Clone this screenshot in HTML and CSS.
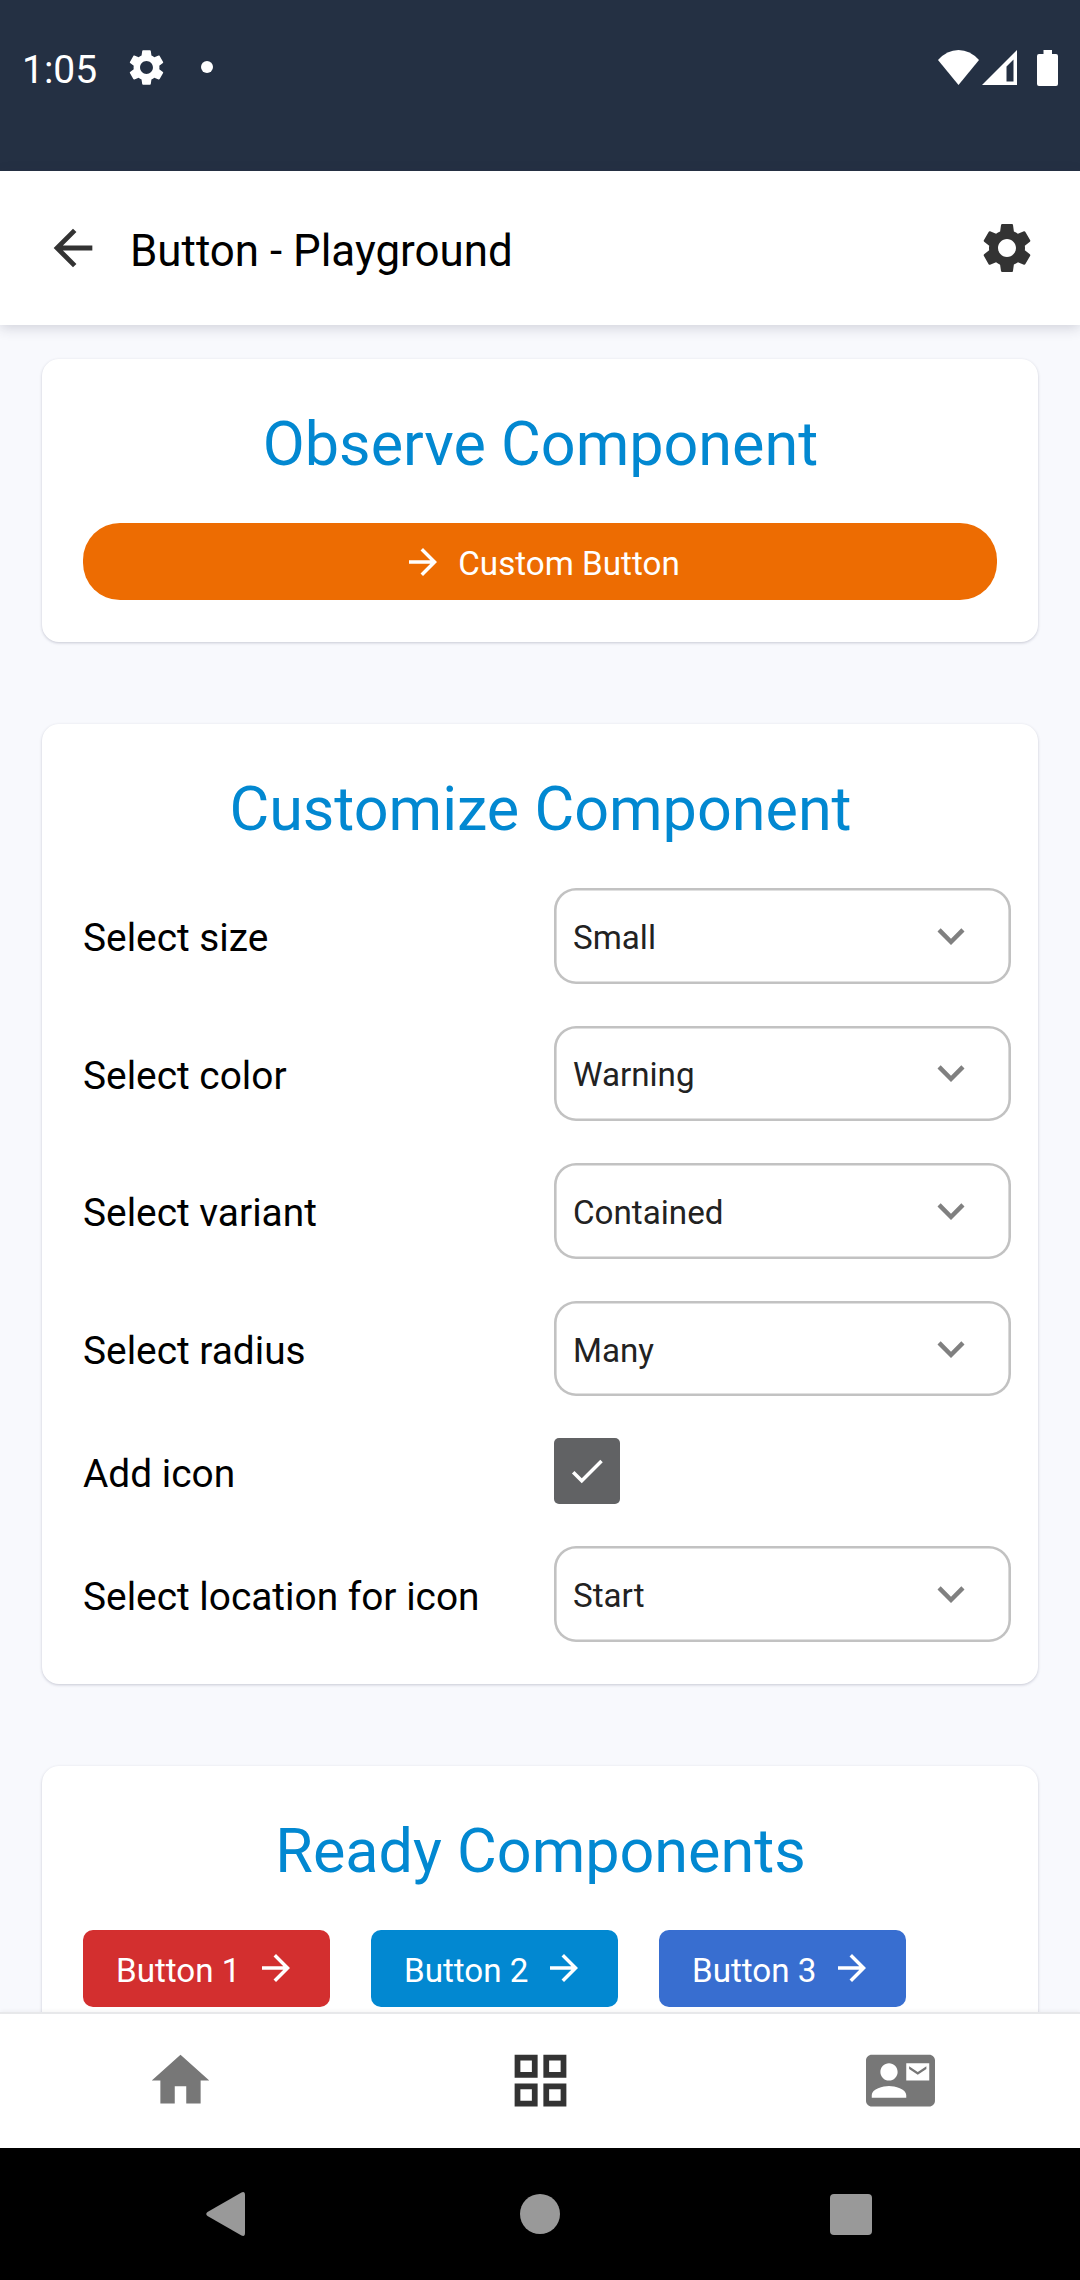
FILE: index.html
```html
<!DOCTYPE html>
<html lang="en">
<head>
<meta charset="utf-8">
<title>Button - Playground</title>
<link rel="stylesheet" href="styles.css">
</head>
<body>
<svg class="defs" aria-hidden="true">
  <symbol id="gear" viewBox="0 0 24 24"><path d="M19.14 12.94c.04-.3.06-.61.06-.94 0-.32-.02-.64-.07-.94l2.03-1.58c.18-.14.23-.41.12-.61l-1.92-3.32c-.12-.22-.37-.29-.59-.22l-2.39.96c-.5-.38-1.03-.7-1.62-.94l-.36-2.54c-.04-.24-.24-.41-.48-.41h-3.84c-.24 0-.43.17-.47.41l-.36 2.54c-.59.24-1.13.57-1.62.94l-2.39-.96c-.22-.08-.47 0-.59.22L2.74 8.87c-.12.21-.08.47.12.61l2.03 1.58c-.05.3-.09.63-.09.94s.02.64.07.94l-2.03 1.58c-.18.14-.23.41-.12.61l1.92 3.32c.12.22.37.29.59.22l2.39-.96c.5.38 1.03.7 1.62.94l.36 2.54c.05.24.24.41.48.41h3.84c.24 0 .44-.17.47-.41l.36-2.54c.59-.24 1.13-.56 1.62-.94l2.39.96c.22.08.47 0 .59-.22l1.92-3.32c.12-.22.07-.47-.12-.61l-2.01-1.58zM12 15.6c-1.98 0-3.6-1.62-3.6-3.6s1.62-3.6 3.6-3.6 3.6 1.62 3.6 3.6-1.62 3.6-3.6 3.6z"/></symbol>
  <symbol id="arrow-right" viewBox="0 0 24 24"><path d="M12 4l-1.41 1.41L16.17 11H4v2h12.17l-5.58 5.59L12 20l8-8z"/></symbol>
  <symbol id="chevron" viewBox="0 0 24 24"><path d="M16.59 8.59L12 13.17 7.41 8.59 6 10l6 6 6-6z"/></symbol>
</svg>

<div class="status-bar">
  <div class="status-group">
    <span class="clock">1:05</span>
    <svg class="status-gear"><use href="#gear"/></svg>
    <span class="dot"></span>
  </div>
  <div class="status-group">
    <svg class="wifi" viewBox="0 0 41 35"><path d="M20.500 35L0 10Q9 0 20.500 0T41 10z"/></svg>
    <svg class="signal" viewBox="0 0 35 35"><path fill-rule="evenodd" d="M35 0V35H0zM31.500 9.500L24.500 16.500V31.500H31.500z"/></svg>
    <svg class="battery" viewBox="0 0 21 36"><path d="M6.500 0H15V4H19Q21 4 21 6V34Q21 36 19 36H2Q0 36 0 34V6Q0 4 2 4H6.500z"/></svg>
  </div>
</div>

<header class="app-bar">
  <svg class="back" viewBox="0 0 24 24"><path d="M20 11H7.830l5.590-5.590L12 4l-8 8 8 8 1.410-1.410L7.830 13H20z"/></svg>
  <h1 class="app-title">Button - Playground</h1>
  <svg class="settings"><use href="#gear"/></svg>
</header>

<main class="content">
  <section class="card">
    <h2 class="card-title">Observe Component</h2>
    <div class="btn btn-wide"><svg class="btn-icon"><use href="#arrow-right"/></svg><span>Custom Button</span></div>
  </section>

  <section class="card">
    <h2 class="card-title">Customize Component</h2>
    <div class="form">
      <div class="row"><span class="label">Select size</span><div class="select"><span>Small</span><svg class="chevron"><use href="#chevron"/></svg></div></div>
      <div class="row"><span class="label">Select color</span><div class="select"><span>Warning</span><svg class="chevron"><use href="#chevron"/></svg></div></div>
      <div class="row"><span class="label">Select variant</span><div class="select"><span>Contained</span><svg class="chevron"><use href="#chevron"/></svg></div></div>
      <div class="row"><span class="label">Select radius</span><div class="select"><span>Many</span><svg class="chevron"><use href="#chevron"/></svg></div></div>
      <div class="row"><span class="label">Add icon</span><div class="checkbox"><svg class="check" viewBox="0 0 24 24"><path d="M9 16.170L4.830 12l-1.420 1.410L9 19 21 7l-1.410-1.410z"/></svg></div></div>
      <div class="row"><span class="label">Select location for icon</span><div class="select"><span>Start</span><svg class="chevron"><use href="#chevron"/></svg></div></div>
    </div>
  </section>

  <section class="card">
    <h2 class="card-title">Ready Components</h2>
    <div class="btn-row">
      <div class="btn btn-error"><span>Button 1</span><svg class="btn-icon"><use href="#arrow-right"/></svg></div>
      <div class="btn btn-info"><span>Button 2</span><svg class="btn-icon"><use href="#arrow-right"/></svg></div>
      <div class="btn btn-primary"><span>Button 3</span><svg class="btn-icon"><use href="#arrow-right"/></svg></div>
    </div>
  </section>
</main>

<nav class="tabs">
  <div class="tab"><svg class="tab-icon" viewBox="0 0 24 24"><path d="M10 20v-6h4v6h5v-8h3L12 3 2 12h3v8z"/></svg></div>
  <div class="tab tab-active"><svg class="tab-icon" viewBox="0 0 24 24"><path fill-rule="evenodd" d="M3 3v8h8V3H3zm6 6H5V5h4v4zm-6 4v8h8v-8H3zm6 6H5v-4h4v4zm4-16v8h8V3h-8zm6 6h-4V5h4v4zm-6 4v8h8v-8h-8zm6 6h-4v-4h4v4z"/></svg></div>
  <div class="tab"><svg class="tab-icon" viewBox="0 0 24 24"><path d="M21 8V7l-3 2-3-2v1l3 2 3-2zm1-5H2C.9 3 0 3.900 0 5v14c0 1.100.9 2 2 2h20c1.100 0 1.990-.9 1.990-2L24 5c0-1.100-.9-2-2-2zM8 6c1.660 0 3 1.340 3 3s-1.340 3-3 3-3-1.340-3-3 1.340-3 3-3zm6 12H2v-1c0-2 4-3.100 6-3.100s6 1.100 6 3.100v1zm8-6h-8V6h8v6z"/></svg></div>
</nav>

<div class="system-nav">
  <svg class="sys-back" viewBox="0 0 39 44"><path d="M35.500 .4Q39 -1 39 3V41Q39 45 35.500 43.600L1.500 24Q-1 22 1.500 20z"/></svg>
  <span class="sys-home"></span>
  <span class="sys-recent"></span>
</div>
</body>
</html>
```
FILE: styles.css
```css
* { box-sizing: border-box; }

body {
  margin: 0;
  width: 1080px;
  height: 2280px;
  overflow: hidden;
  display: flex;
  flex-direction: column;
  background: #f8f9fd;
  font-family: Roboto, sans-serif;
  color: #000;
}

h1, h2 { margin: 0; font-weight: 400; }
svg { display: block; flex: none; fill: currentColor; }
.defs { display: none; }

/* Status bar */
.status-bar {
  height: 171px;
  flex: none;
  padding: 46px 22px 0 22px;
  display: flex;
  justify-content: space-between;
  align-items: flex-start;
  background: #243043;
  color: #fff;
}
.status-group { height: 43px; display: flex; align-items: center; }
.clock { width: 103px; padding-top: 5px; font-size: 39px; line-height: 43px; }
.status-gear { width: 43px; height: 43px; }
.dot { width: 12px; height: 12px; margin: 0 0 2px 33px; border-radius: 50%; background: #fff; }
.wifi { width: 41px; height: 35px; }
.signal { width: 35px; height: 35px; margin-left: 3px; }
.battery { width: 21px; height: 36px; margin-left: 20px; }

/* App bar */
.app-bar {
  height: 154px;
  flex: none;
  padding: 0 43px 0 44px;
  display: flex;
  align-items: center;
  position: relative;
  z-index: 1;
  background: #fff;
  box-shadow: 0 3px 12px rgba(40, 45, 70, .19);
}
.back { width: 58px; height: 58px; color: #333; }
.app-title { flex: 1; margin-left: 28px; padding-top: 6px; font-size: 43.9px; line-height: 52px; }
.settings { width: 60px; height: 60px; color: #333; }

/* Cards */
.content {
  height: 1687px;
  flex: none;
  overflow: hidden;
  padding: 34px 42px 0;
  display: flex;
  flex-direction: column;
  gap: 82px;
}
.card {
  flex: none;
  padding: 42px 41px;
  border-radius: 17px;
  background: #fff;
  box-shadow: 0 1px 3px rgba(40, 45, 80, .24);
}
.card-title {
  margin-bottom: 36px;
  padding-left: 1px;
  font-size: 61.1px;
  line-height: 86px;
  text-align: center;
  color: #0288d1;
}

/* Buttons */
.btn {
  width: 247px;
  height: 77px;
  padding: 0 33px;
  display: flex;
  align-items: center;
  justify-content: space-between;
  border-radius: 10px;
  font-size: 33.2px;
  color: #fff;
}
.btn span { padding-top: 4px; }
.btn-icon { width: 42px; height: 42px; }
.btn-wide {
  width: 100%;
  padding: 0 32px 0 34px;
  justify-content: center;
  gap: 14px;
  border-radius: 37px;
  background: #ed6c02;
}
.btn-row { display: flex; gap: 41px; }
.btn-error { background: #d32f2f; }
.btn-info { background: #0288d1; }
.btn-primary { background: #386ed0; }

/* Form */
.form { display: flex; flex-direction: column; gap: 42px; }
.row { display: flex; align-items: center; }
.label { width: 471px; padding-top: 5px; font-size: 38.85px; line-height: 46px; }
.select {
  width: 457px;
  height: 95.6px;
  margin-right: -14px;
  padding: 0 33px 0 19px;
  flex: none;
  display: flex;
  align-items: center;
  justify-content: space-between;
  border-radius: 22px;
  box-shadow: inset 0 0 0 2.6px #c2c2c2;
  font-size: 33.2px;
  color: #222;
}
.select span { padding-top: 3px; }
.chevron { width: 54px; height: 54px; color: #808080; }
.checkbox {
  width: 66px;
  height: 66px;
  display: flex;
  align-items: center;
  justify-content: center;
  border-radius: 5px;
  background: #616264;
  color: #fff;
}
.check { width: 42px; height: 42px; }

/* Bottom tabs */
.tabs {
  height: 136px;
  flex: none;
  padding-bottom: 2px;
  display: grid;
  grid-template-columns: repeat(3, 1fr);
  position: relative;
  z-index: 1;
  background: #fff;
  border-top: 2px solid #e7e8ea;
  box-shadow: 0 -1px 4px rgba(0, 0, 0, .05);
}
.tab { display: flex; align-items: center; justify-content: center; color: #777; }
.tab-active { color: #333; }
.tab-icon { width: 69px; height: 69px; }

/* System navigation */
.system-nav {
  height: 132px;
  flex: none;
  padding: 0 208px 0 206px;
  display: flex;
  align-items: center;
  justify-content: space-between;
  background: #000;
  color: #999;
}
.sys-back { width: 39px; height: 44px; }
.sys-home { width: 40px; height: 40px; margin-left: 4px; border-radius: 50%; background: #999; }
.sys-recent { width: 42px; height: 41px; border-radius: 4px; background: #999; }
```
